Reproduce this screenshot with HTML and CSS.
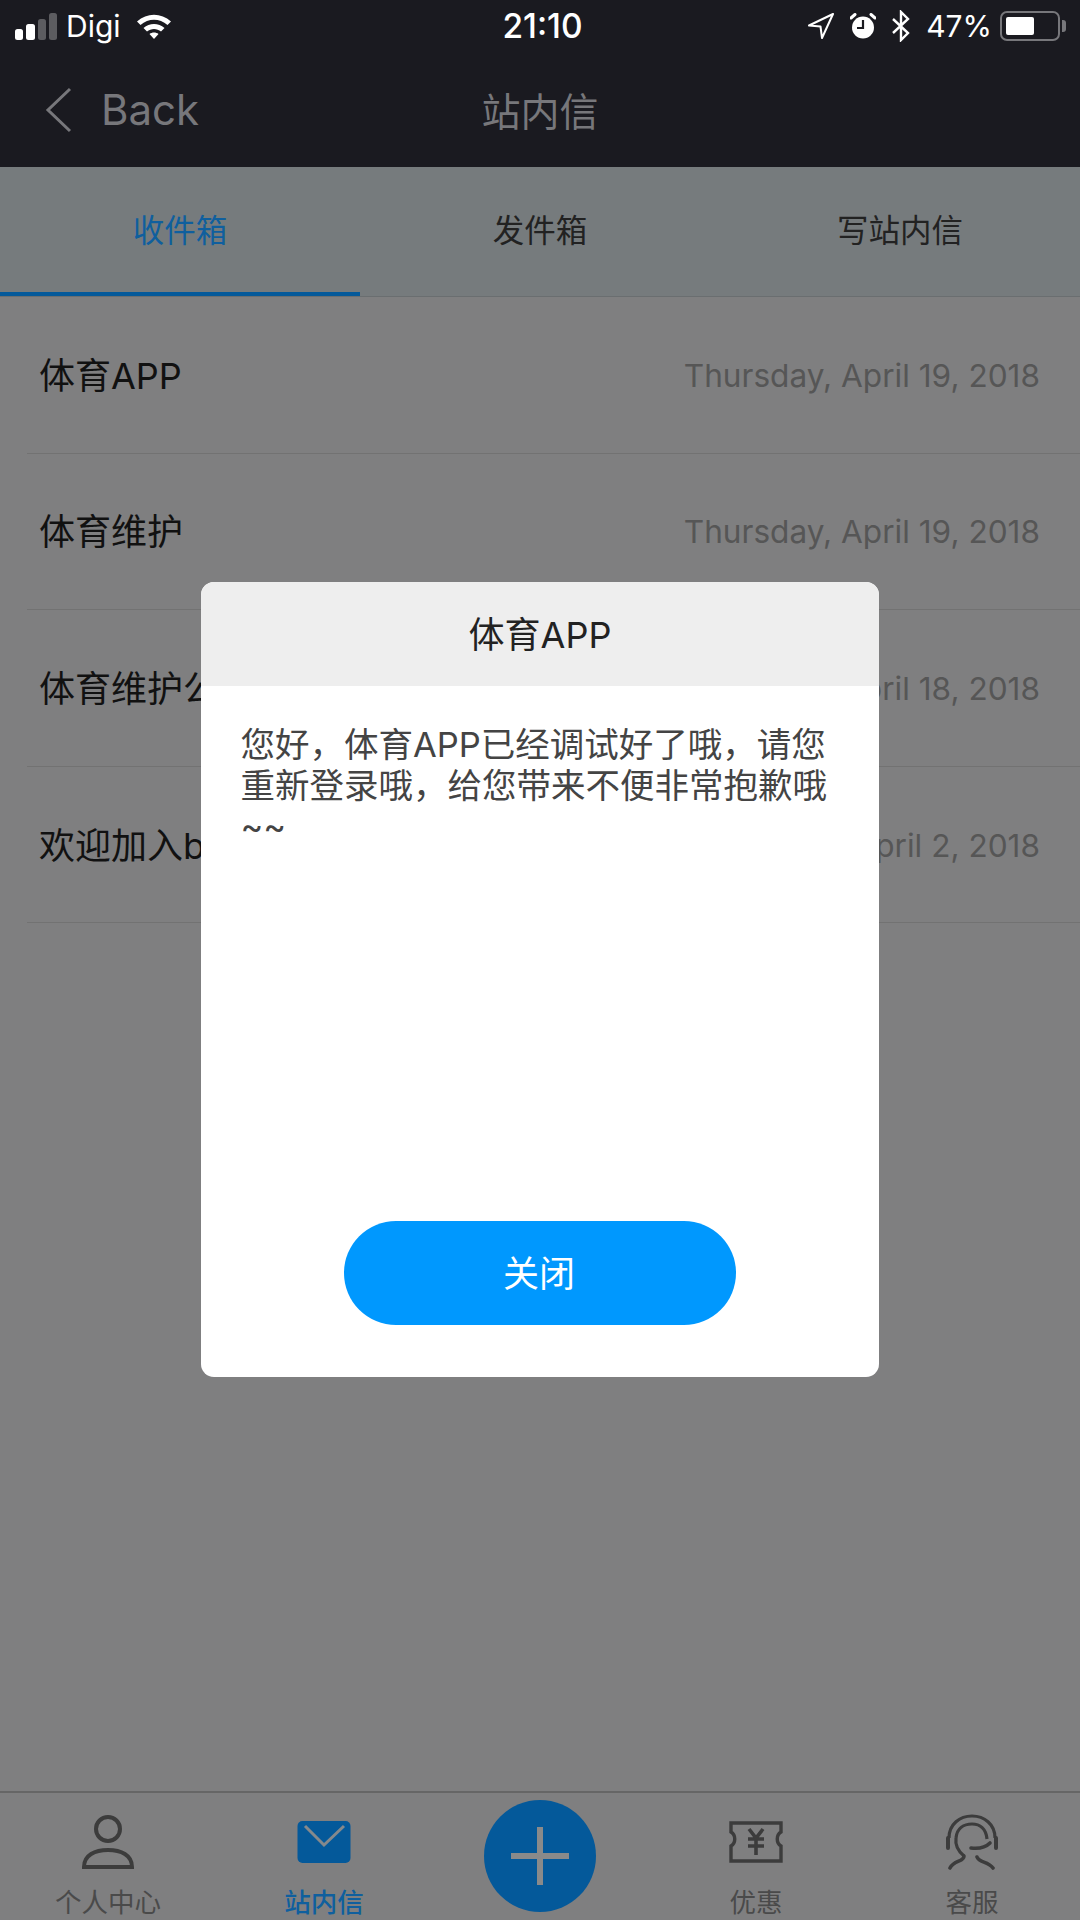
FILE: index.html
```html
<!DOCTYPE html>
<html lang="zh-CN">
<head>
  <meta charset="UTF-8">
  <title>站内信</title>
  <link rel="stylesheet" href="styles.css">
</head>
<body>
  <div class="page">
    <!-- status bar -->
    <div class="status">
      <div class="status-left">
        <svg class="signal" width="42" height="27" viewBox="0 0 42 27">
          <rect x="0" y="16" width="8" height="11" rx="2.5" fill="#fff"/>
          <rect x="11" y="11" width="9" height="16" rx="2.5" fill="#fff"/>
          <rect x="23" y="6" width="8" height="21" rx="2.5" fill="#5c5c60"/>
          <rect x="34" y="0" width="8" height="27" rx="2.5" fill="#5c5c60"/>
        </svg>
        <span>Digi</span>
        <svg class="wifi" width="36" height="28" viewBox="0 0 36 28">
          <path d="M1 9.5C11 0.5 25 0.5 35 9.5L31.5 13C23.5 6 12.5 6 4.5 13Z" fill="#fff"/>
          <path d="M7.5 16C13.5 10.5 22.5 10.5 28.5 16L25 19.5C21 16 15 16 11 19.5Z" fill="#fff"/>
          <path d="M13.5 22C16 20 20 20 22.5 22L18 27Z" fill="#fff"/>
        </svg>
      </div>
      <div class="status-time">21:10</div>
      <div class="status-right">
        <svg width="26" height="26" viewBox="0 0 26 26">
          <path d="M25 1L1 12.5L12.5 13.5L14 25Z" fill="none" stroke="#fff" stroke-width="2" stroke-linejoin="round"/>
        </svg>
        <svg width="26" height="26" viewBox="0 0 26 26">
          <circle cx="13" cy="14.5" r="11" fill="#fff"/>
          <path d="M13 7V15H7" fill="none" stroke="#1a1a20" stroke-width="2.2"/>
          <path d="M1 5L5 1.5M25 5L21 1.5" stroke="#fff" stroke-width="3" stroke-linecap="round"/>
        </svg>
        <svg width="18" height="32" viewBox="0 0 18 32">
          <path d="M1 9L16 23L9 30V2L16 9L1 23" fill="none" stroke="#fff" stroke-width="2.4"/>
        </svg>
        <span>47%</span>
        <div class="battery"><div class="battery-level"></div></div>
      </div>
    </div>

    <!-- nav bar -->
    <header class="navbar">
      <div class="back">
        <svg width="27" height="46" viewBox="0 0 27 46">
          <path d="M25 2L3 23L25 44" fill="none" stroke="#77777b" stroke-width="3"/>
        </svg>
        <span>Back</span>
      </div>
      <h1>站内信</h1>
    </header>

    <!-- tabs -->
    <nav class="tabs">
      <div class="tab active">收件箱</div>
      <div class="tab">发件箱</div>
      <div class="tab">写站内信</div>
    </nav>

    <!-- message list -->
    <ul class="list">
      <li class="row"><span>体育APP</span><span class="date">Thursday, April 19, 2018</span></li>
      <li class="row"><span>体育维护</span><span class="date">Thursday, April 19, 2018</span></li>
      <li class="row"><span>体育维护公告</span><span class="date">April 18, 2018</span></li>
      <li class="row"><span>欢迎加入b</span><span class="date">April 2, 2018</span></li>
    </ul>

    <!-- bottom tab bar -->
    <footer class="bottom">
      <div class="item">
        <svg width="54" height="56" viewBox="0 0 54 56">
          <circle cx="27" cy="15" r="12" fill="none" stroke="#3c3c3c" stroke-width="4"/>
          <path d="M3 53C3 41 14 36 27 36C40 36 51 41 51 53Z" fill="none" stroke="#3c3c3c" stroke-width="4"/>
        </svg>
        <span>个人中心</span>
      </div>
      <div class="item current">
        <svg width="54" height="56" viewBox="0 0 54 56">
          <rect x="0.5" y="7" width="53" height="42" rx="5" fill="#04599a"/>
          <path d="M8 12L27 31L47 12" fill="none" stroke="#85898c" stroke-width="3"/>
        </svg>
        <span>站内信</span>
      </div>
      <div class="item plus-item">
        <div class="plus"></div>
      </div>
      <div class="item">
        <svg width="54" height="56" viewBox="0 0 54 56">
          <path d="M2 9H52V18C47 21 47 29 52 32V47H2V32C7 29 7 21 2 18Z" fill="none" stroke="#3c3c3c" stroke-width="3.4"/>
          <path d="M20 15L27 24L34 15M27 24V41M19 25H35M19 32H35" fill="none" stroke="#3c3c3c" stroke-width="3.6"/>
        </svg>
        <span>优惠</span>
      </div>
      <div class="item">
        <svg width="54" height="56" viewBox="0 0 54 56">
          <path d="M4 24C4 10 15 2 27 2C39 2 50 10 50 24" fill="none" stroke="#3c3c3c" stroke-width="3.2"/>
          <path d="M3 24V34M51 24V34" stroke="#3c3c3c" stroke-width="4" stroke-linecap="round"/>
          <path d="M19 42C13 37 10 31 11 24C12 14 19 10 27 10C35 10 41 15 42 25" fill="none" stroke="#3c3c3c" stroke-width="3.2"/>
          <path d="M26 34C34 35 41 33 45 29" fill="none" stroke="#3c3c3c" stroke-width="3.6" stroke-linecap="round"/>
          <path d="M19 42C19 48 9 46 5 54M32 43C34 49 43 47 48 54" fill="none" stroke="#3c3c3c" stroke-width="3.6" stroke-linecap="round"/>
        </svg>
        <span>客服</span>
      </div>
    </footer>

    <!-- message dialog -->
    <div class="modal">
      <div class="modal-title">体育APP</div>
      <div class="modal-body">您好，体育APP已经调试好了哦，请您重新登录哦，给您带来不便非常抱歉哦~~</div>
      <button class="modal-close" type="button">关闭</button>
    </div>
  </div>
</body>
</html>
```

FILE: styles.css
```css
:root {
  --bar: #1a1a20;
  --bar-text: #77777b;
  --tabs: #767b7d;
  --dim: #7f7f80;
  --line: #727272;
  --accent: #04599a;
  --blue: #0098fe;
  --cjk: "Inter", "Noto Sans CJK SC", sans-serif;
}

* {
  box-sizing: border-box;
}

body {
  margin: 0;
  font-family: var(--cjk);
  background: var(--dim);
  color: #111;
}

.page {
  position: relative;
  display: flex;
  flex-direction: column;
  width: 1080px;
  height: 1920px;
  overflow: hidden;
}

.status {
  display: grid;
  grid-template-columns: 1fr auto 1fr;
  align-items: center;
  height: 54px;
  padding: 0 20px 2px 15px;
  background: var(--bar);
  color: #fff;
  font-size: 30px;
}

.status-left {
  display: flex;
  align-items: center;
  gap: 9px;
}

.status-left .wifi {
  margin-left: 6px;
}

.status-time {
  font-size: 33.5px;
  font-weight: 500;
  padding-left: 10px;
}

.status-right {
  display: flex;
  align-items: center;
  justify-content: flex-end;
  gap: 16px;
}

.battery {
  position: relative;
  width: 60px;
  height: 30px;
  margin-left: -8px;
  padding: 4px;
  border: 2px solid #77777b;
  border-radius: 7px;
}

.battery::after {
  content: "";
  position: absolute;
  right: -8px;
  top: 7px;
  width: 4px;
  height: 12px;
  background: #77777b;
  border-radius: 0 3px 3px 0;
}

.battery-level {
  width: 28px;
  height: 100%;
  background: #fff;
  border-radius: 2px;
}

.navbar {
  position: relative;
  display: flex;
  align-items: center;
  justify-content: center;
  height: 113px;
  padding-bottom: 4px;
  background: var(--bar);
  color: var(--bar-text);
}

.navbar h1 {
  margin: 0;
  font-size: 39px;
  font-weight: 400;
}

.back {
  position: absolute;
  left: 45px;
  top: 30px;
  display: flex;
  align-items: center;
  gap: 29px;
  font-size: 42px;
}

.tabs {
  display: flex;
  height: 130px;
  background: var(--tabs);
  border-bottom: 1px solid #6a6e70;
}

.tab {
  flex: 1;
  display: flex;
  align-items: center;
  justify-content: center;
  padding-bottom: 3px;
  font-size: 31.5px;
  color: #222;
  border-bottom: 4px solid transparent;
}

.tab.active {
  color: #0f5f9e;
  border-bottom-color: var(--accent);
}

.list {
  flex: 1;
  margin: 0;
  padding: 0;
  list-style: none;
}

.row {
  display: flex;
  align-items: center;
  justify-content: space-between;
  height: 156.6px;
  margin-left: 27px;
  padding: 0 40px 4px 12px;
  border-bottom: 1px solid var(--line);
  font-size: 36px;
  white-space: nowrap;
}

.date {
  padding-top: 5px;
  font-size: 31.6px;
  color: #565656;
}

.bottom {
  display: flex;
  height: 129px;
  border-top: 2px solid #666;
  padding-top: 21px;
}

.item {
  flex: 1;
  display: flex;
  flex-direction: column;
  align-items: center;
  gap: 17px;
  font-size: 26.5px;
  line-height: 30px;
  color: #4a4a4a;
}

.item.current {
  color: #0f5f9e;
  font-weight: 500;
}

.plus-item {
  position: relative;
}

.plus {
  position: absolute;
  left: 52px;
  top: -14px;
  width: 112px;
  height: 112px;
  border-radius: 50%;
  background:
    linear-gradient(#8a8a8a, #8a8a8a) center / 58px 6px no-repeat,
    linear-gradient(#8a8a8a, #8a8a8a) center / 6px 58px no-repeat,
    var(--accent);
}

.modal {
  position: absolute;
  left: 201px;
  top: 582px;
  display: flex;
  flex-direction: column;
  width: 678px;
  height: 795px;
  background: #fff;
  border-radius: 13px;
  overflow: hidden;
}

.modal-title {
  display: flex;
  align-items: center;
  justify-content: center;
  height: 104px;
  padding-bottom: 5px;
  background: #eee;
  font-size: 36px;
  color: #222;
}

.modal-body {
  flex: 1;
  padding: 38px 40px 0 39.5px;
  font-size: 34.5px;
  line-height: 41px;
  color: #444;
}

.modal-close {
  align-self: center;
  width: 392px;
  height: 104px;
  margin-bottom: 52px;
  padding: 0 2px 5px 0;
  border: none;
  border-radius: 52px;
  background: var(--blue);
  color: #fff;
  font-family: var(--cjk);
  font-size: 36px;
}
```
